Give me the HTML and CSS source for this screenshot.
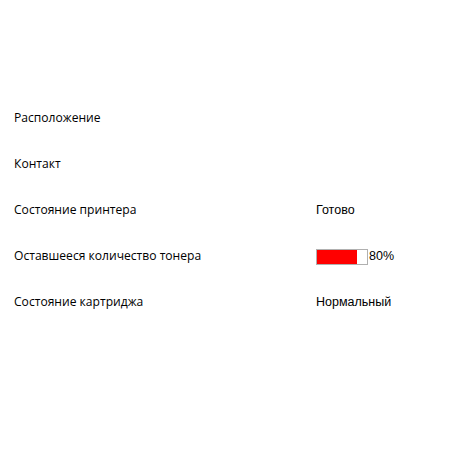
FILE: index.html
```html
<!DOCTYPE html>
<html>
<head>
<meta charset="utf-8">
<link rel="stylesheet" href="styles.css">
</head>
<body>
<div class="info">
  <div class="row"><div class="label">Расположение</div><div class="value"></div></div>
  <div class="row"><div class="label">Контакт</div><div class="value"></div></div>
  <div class="row"><div class="label">Состояние принтера</div><div class="value">Готово</div></div>
  <div class="row"><div class="label">Оставшееся количество тонера</div><div class="value"><span class="bar"><span class="fill" style="width:80%"></span></span><span class="pct">80%</span></div></div>
  <div class="row"><div class="label">Состояние картриджа</div><div class="value">Нормальный</div></div>
</div>
</body>
</html>
```
FILE: styles.css
```css
html, body {
  margin: 0;
  padding: 0;
  background: #fff;
}
.info {
  padding: 108px 0 0 14px;
  display: flex;
  flex-direction: column;
}
.row {
  display: flex;
  height: 46px;
}
.label {
  width: 302px;
  font-family: "Open Sans", sans-serif;
  font-size: 12.1px;
  color: #000;
  line-height: 20px;
}
.value {
  font-family: "Liberation Sans", Arial, sans-serif;
  font-size: 12.5px;
  color: #000;
  line-height: 20px;
  display: flex;
  align-items: center;
  height: 20px;
}
.bar {
  display: block;
  width: 50px;
  height: 14px;
  border: 1px solid #b0b0b0;
  background: #fff;
  margin-top: 2px;
}
.fill {
  display: block;
  height: 100%;
  background: #ff0000;
}
.pct {
  margin-left: 1px;
}
```
